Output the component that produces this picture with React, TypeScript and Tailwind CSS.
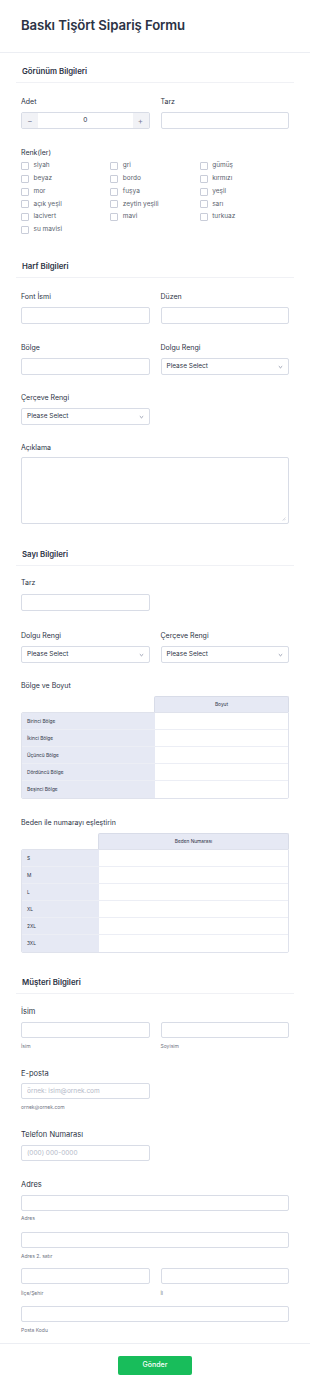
import React from "react";

const Label = ({ children, className = "" }: { children: React.ReactNode; className?: string }) => (
  <div className={"h-[10px] leading-[10px] text-[7px] font-normal text-[#2c3345] " + className}>{children}</div>
);

const BigLabel = ({ children, className = "" }: { children: React.ReactNode; className?: string }) => (
  <div className={"h-[10px] leading-[10px] text-[7.5px] font-normal text-[#2c3345] " + className}>{children}</div>
);

const Sub = ({ children, className = "" }: { children: React.ReactNode; className?: string }) => (
  <div className={"h-[8px] leading-[8px] text-[5px] text-[#6f7483] " + className}>{children}</div>
);

const Input = ({ className = "h-[17px]", placeholder = "" }: { className?: string; placeholder?: string }) => (
  <input
    placeholder={placeholder}
    className={
      "block w-full rounded-[2px] border border-[#d8dce6] bg-white px-[5px] text-[6.5px] text-[#2c3345] placeholder:text-[#b4b9c8] outline-none " +
      className
    }
  />
);

const Select = () => (
  <div className="flex h-[17px] items-center justify-between rounded-[2px] border border-[#d8dce6] bg-white pl-[5px] pr-[5px]">
    <span className="text-[6.5px] text-[#2c3345]">Please Select</span>
    <svg width="5" height="4" viewBox="0 0 5 4" fill="none">
      <path d="M0.8 1.2 L2.5 2.8 L4.2 1.2" stroke="#6f7691" strokeWidth="0.7" />
    </svg>
  </div>
);

const SectionHeader = ({ title, className = "" }: { title: string; className?: string }) => (
  <div className={"-mx-[5px] border-b border-[#f0f1f5] px-[6px] pb-[6px] " + className}>
    <div className="h-[10px] leading-[10px] text-[7.8px] font-semibold text-[#2c3345]">{title}</div>
  </div>
);

const Check = ({ text }: { text: string }) => (
  <div className="flex h-[12.7px] items-center gap-[4.5px]">
    <div className="h-[8px] w-[8px] rounded-[1px] border border-[#c9cdd9] bg-white" />
    <span className="text-[6.5px] text-[#5a5f6e]">{text}</span>
  </div>
);

const Matrix = ({
  header,
  rows,
  leftClass,
}: {
  header: string;
  rows: string[];
  leftClass: string;
}) => (
  <div className="flex flex-col">
    <div className="flex h-[16px]">
      <div className={leftClass} />
      <div className="flex flex-1 items-center justify-center rounded-t-[2px] border border-b-0 border-[#d8dce8] bg-[#e6e9f4] text-[4.8px] text-[#2c3345]">
        {header}
      </div>
    </div>
    <div className="overflow-hidden rounded-[2px] rounded-tr-none border border-[#dfe2ec]">
      {rows.map((r, i) => (
        <div key={r} className={"flex h-[17px] " + (i < rows.length - 1 ? "border-b border-[#eceef5]" : "")}>
          <div className={"flex items-center bg-[#e6e9f4] pl-[5px] text-[4.8px] text-[#2c3345] " + leftClass}>{r}</div>
          <div className="flex-1 bg-white" />
        </div>
      ))}
    </div>
  </div>
);

export default function App() {
  const colors = [
    "siyah",
    "gri",
    "gümüş",
    "beyaz",
    "bordo",
    "kırmızı",
    "mor",
    "fuşya",
    "yeşil",
    "açık yeşil",
    "zeytin yeşili",
    "sarı",
    "lacivert",
    "mavi",
    "turkuaz",
    "su mavisi",
  ];
  return (
    <div className="w-[310px] bg-white font-['Inter','Noto_Sans',sans-serif] text-[#2c3345]">
      <div className="flex h-[53px] items-center border-b border-[#eceef3] px-[21px]">
        <h1 className="text-[13.2px] font-semibold tracking-[-0.1px] text-[#2c3345]">Baskı Tişört Sipariş Formu</h1>
      </div>

      <div className="px-[21px]">
        <SectionHeader title="Görünüm Bilgileri" className="mt-[13px]" />

        <div className="mt-[14px] grid grid-cols-2 gap-x-[11px]">
          <div>
            <Label>Adet</Label>
            <div className="mt-[5px] flex h-[17px] overflow-hidden rounded-[2px] border border-[#d8dce6]">
              <div className="flex w-[16px] items-center justify-center bg-[#f1f2f6] text-[8px] text-[#7a8096]">−</div>
              <div className="flex flex-1 items-center justify-center text-[6.5px] text-[#2c3345]">0</div>
              <div className="flex w-[16px] items-center justify-center bg-[#f1f2f6] text-[8px] text-[#7a8096]">+</div>
            </div>
          </div>
          <div>
            <Label>Tarz</Label>
            <div className="mt-[5px]">
              <Input />
            </div>
          </div>
        </div>

        <Label className="mt-[19px]">Renk(ler)</Label>
        <div className="mt-[2px] grid grid-cols-3">
          {colors.map((c) => (
            <Check key={c} text={c} />
          ))}
        </div>

        <SectionHeader title="Harf Bilgileri" className="mt-[25px]" />

        <div className="mt-[14px] grid grid-cols-2 gap-x-[11px]">
          <div>
            <Label>Font İsmi</Label>
            <div className="mt-[5px]">
              <Input />
            </div>
          </div>
          <div>
            <Label>Düzen</Label>
            <div className="mt-[5px]">
              <Input />
            </div>
          </div>
        </div>

        <div className="mt-[19px] grid grid-cols-2 gap-x-[11px]">
          <div>
            <Label>Bölge</Label>
            <div className="mt-[5px]">
              <Input />
            </div>
          </div>
          <div>
            <Label>Dolgu Rengi</Label>
            <div className="mt-[5px]">
              <Select />
            </div>
          </div>
        </div>

        <div className="mt-[18px] grid grid-cols-2 gap-x-[11px]">
          <div>
            <Label>Çerçeve Rengi</Label>
            <div className="mt-[5px]">
              <Select />
            </div>
          </div>
        </div>

        <Label className="mt-[18px]">Açıklama</Label>
        <div className="relative mt-[4px] h-[67px] rounded-[2px] border border-[#d8dce6] bg-white">
          <svg className="absolute bottom-[2px] right-[2px]" width="4" height="4" viewBox="0 0 4 4">
            <path d="M3.5 0.5 L0.5 3.5 M3.5 2 L2 3.5" stroke="#b4b9c8" strokeWidth="0.5" />
          </svg>
        </div>

        <SectionHeader title="Sayı Bilgileri" className="mt-[25px]" />

        <div className="mt-[12px] grid grid-cols-2 gap-x-[11px]">
          <div>
            <Label>Tarz</Label>
            <div className="mt-[6px]">
              <Input />
            </div>
          </div>
        </div>

        <div className="mt-[20px] grid grid-cols-2 gap-x-[11px]">
          <div>
            <Label>Dolgu Rengi</Label>
            <div className="mt-[5px]">
              <Select />
            </div>
          </div>
          <div>
            <Label>Çerçeve Rengi</Label>
            <div className="mt-[5px]">
              <Select />
            </div>
          </div>
        </div>

        <Label className="mt-[18px]">Bölge ve Boyut</Label>
        <div className="mt-[5px]">
          <Matrix
            header="Boyut"
            leftClass="w-[133px]"
            rows={["Birinci Bölge", "İkinci Bölge", "Üçüncü Bölge", "Dördüncü Bölge", "Beşinci Bölge"]}
          />
        </div>

        <Label className="mt-[19px]">Beden ile numarayı eşleştirin</Label>
        <div className="mt-[5px]">
          <Matrix header="Beden Numarası" leftClass="w-[77px]" rows={["S", "M", "L", "XL", "2XL", "3XL"]} />
        </div>

        <SectionHeader title="Müşteri Bilgileri" className="mt-[24px]" />

        <BigLabel className="mt-[13px]">İsim</BigLabel>
        <div className="mt-[5px] grid grid-cols-2 gap-x-[11px]">
          <div>
            <Input className="h-[16px]" />
            <Sub className="mt-[4px]">İsim</Sub>
          </div>
          <div>
            <Input className="h-[16px]" />
            <Sub className="mt-[4px]">Soyisim</Sub>
          </div>
        </div>

        <BigLabel className="mt-[19px]">E-posta</BigLabel>
        <div className="mt-[4px] grid grid-cols-2 gap-x-[11px]">
          <div>
            <Input className="h-[16px]" placeholder="örnek: isim@ornek.com" />
            <Sub className="mt-[4px]">ornek@ornek.com</Sub>
          </div>
        </div>

        <BigLabel className="mt-[19px]">Telefon Numarası</BigLabel>
        <div className="mt-[5px] grid grid-cols-2 gap-x-[11px]">
          <div>
            <Input className="h-[16px]" placeholder="(000) 000-0000" />
          </div>
        </div>

        <BigLabel className="mt-[19px]">Adres</BigLabel>
        <div className="mt-[5px]">
          <Input className="h-[16px]" />
          <Sub className="mt-[3px]">Adres</Sub>
        </div>
        <div className="mt-[10px]">
          <Input className="h-[16px]" />
          <Sub className="mt-[4px]">Adres 2. satır</Sub>
        </div>
        <div className="mt-[8px] grid grid-cols-2 gap-x-[11px]">
          <div>
            <Input className="h-[16px]" />
            <Sub className="mt-[5px]">İlçe/Şehir</Sub>
          </div>
          <div>
            <Input className="h-[16px]" />
            <Sub className="mt-[5px]">İl</Sub>
          </div>
        </div>
        <div className="mt-[9px]">
          <Input className="h-[16px]" />
          <Sub className="mt-[4px]">Posta Kodu</Sub>
        </div>
      </div>

      <div className="mt-[9px] flex justify-center border-t border-[#eceef3] pb-[17px] pt-[12px]">
        <button className="flex h-[19px] w-[74px] items-center justify-center rounded-[2px] bg-[#18bd5b] text-[7px] font-medium text-white">
          Gönder
        </button>
      </div>
    </div>
  );
}
